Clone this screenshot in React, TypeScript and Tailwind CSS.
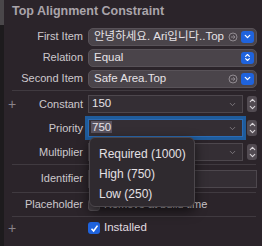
import { ChevronDown, ChevronUp, ChevronsUpDown } from "lucide-react";

const font = "font-['Liberation_Sans','Noto_Sans_CJK_KR',sans-serif]";

// 青いポップアップボタン
function BlueButton({ both }: { both?: boolean }) {
  return (
    <div className="w-[13px] h-[12px] rounded-[3px] bg-[#1f63dd] flex items-center justify-center">
      {both ? (
        <ChevronsUpDown size={9} strokeWidth={3} className="text-white" />
      ) : (
        <ChevronDown size={9} strokeWidth={3.5} className="text-white" />
      )}
    </div>
  );
}

function GoIcon() {
  return (
    <svg width="10" height="10" viewBox="0 0 10 10" className="text-[#8f898f]">
      <circle cx="5" cy="5" r="4" fill="none" stroke="currentColor" strokeWidth="1" />
      <path d="M3 5h4M5.3 3.3 7 5 5.3 6.7" fill="none" stroke="currentColor" strokeWidth="1" />
    </svg>
  );
}

function Stepper() {
  return (
    <div className="w-[10px] h-[16px] rounded-[3px] bg-[#524b52] flex flex-col items-center justify-center -space-y-[2px]">
      <ChevronUp size={9} strokeWidth={3} className="text-[#d8d4d8]" />
      <ChevronDown size={9} strokeWidth={3} className="text-[#d8d4d8]" />
    </div>
  );
}

function Popup({ text, go, both }: { text: string; go?: boolean; both?: boolean }) {
  return (
    <div className="flex-1 h-[18px] rounded-[5px] bg-[#4a444a] border border-[#585258] flex items-center pl-[5px] pr-[2px] gap-[3px]">
      <span className="flex-1 text-[11.5px] text-[#e6e2e6] truncate">{text}</span>
      {go && <GoIcon />}
      <BlueButton both={both} />
    </div>
  );
}

function Field({ value, focus, select }: { value: string; focus?: boolean; select?: boolean }) {
  return (
    <div className="flex-1 flex items-center gap-[4px]">
      <div
        className={`flex-1 h-[18px] bg-[#342e34] flex items-center pl-[2px] pr-[5px] ${
          focus ? "ring-[3px] ring-[#1f5c9c] border border-[#2a6bb5]" : "border border-[#4d474d]"
        }`}
      >
        <span className={`flex-1 text-[11.5px] text-[#e6e2e6] ${select ? "" : "pl-[1px]"}`}>
          {select ? <span className="bg-[#5a5460] px-[1px]">{value}</span> : value}
        </span>
        <ChevronDown size={9} strokeWidth={2} className="text-[#8f898f]" />
      </div>
      <Stepper />
    </div>
  );
}

function Row({ label, plus, h, children }: { label: string; plus?: boolean; h: string; children?: React.ReactNode }) {
  return (
    <div className={`flex items-center ${h}`}>
      <div className="w-[79px] flex items-center">
        <span className="w-[14px] pl-[4px] text-[14px] text-[#8a848a] leading-none">{plus ? "+" : ""}</span>
        <span className="flex-1 text-right text-[11px] text-[#cdc8cd]">{label}</span>
      </div>
      <div className="flex-1 flex items-center pl-[5px] pr-[5px]">{children}</div>
    </div>
  );
}

function Sep() {
  return <div className="ml-[8px] mr-[6px] h-px bg-[#403a40]" />;
}

function Check({ on }: { on?: boolean }) {
  return on ? (
    <div className="w-[12px] h-[12px] rounded-[3px] bg-[#1f63dd] flex items-center justify-center">
      <svg width="9" height="9" viewBox="0 0 9 9">
        <path d="M1.5 4.8 3.6 7 7.5 1.6" fill="none" stroke="white" strokeWidth="1.6" />
      </svg>
    </div>
  ) : (
    <div className="w-[12px] h-[12px] rounded-[3px] bg-[#4a444a] border border-[#5a545a]" />
  );
}

export default function App() {
  return (
    <div className={`w-[262px] h-[246px] bg-[#2b242a] flex overflow-hidden relative ${font}`}>
      <div className="w-[4px] flex flex-col">
        <div className="h-[25px] bg-[#4a474a]" />
        <div className="flex-1 bg-[#1d1b1d]" />
      </div>
      <div className="flex-1 flex flex-col">
        <div className="h-[26px] pl-[8px] pt-[2px] text-[12.5px] font-bold text-[#aaa4aa]">Top Alignment Constraint</div>
        <Row label="First Item" h="h-[21px]">
          <Popup text="안녕하세요. Ari입니다..Top" go />
        </Row>
        <Row label="Relation" h="h-[21px]">
          <Popup text="Equal" both />
        </Row>
        <Row label="Second Item" h="h-[21px]">
          <Popup text="Safe Area.Top" go />
        </Row>
        <div className="h-[1px]" />
        <Sep />
        <div className="h-[1px]" />
        <Row label="Constant" plus h="h-[24px]">
          <Field value="150" />
        </Row>
        <Row label="Priority" h="h-[24px]">
          <Field value="750" focus select />
        </Row>
        <Row label="Multiplier" h="h-[24px]">
          <Field value="1" />
        </Row>
        <Sep />
        <Row label="Identifier" h="h-[27px]">
          <div className="flex-1 h-[18px] bg-[#342e34] border border-[#4d474d]" />
        </Row>
        <Sep />
        <Row label="Placeholder" h="h-[23px]">
          <div className="flex items-center gap-[4px]">
            <Check />
            <span className="text-[11px] text-[#cdc8cd]">Remove at build time</span>
          </div>
        </Row>
        <Sep />
        <Row label="" plus h="h-[22px]">
          <div className="flex items-center gap-[4px]">
            <Check on />
            <span className="text-[11.5px] text-[#e0dce0]">Installed</span>
          </div>
        </Row>
      </div>

      {/* 優先度メニュー */}
      <div className="absolute left-[89px] top-[137px] w-[106px] h-[70px] rounded-[6px] bg-[#2f2a2f] border border-[#4c474c] shadow-[0_4px_12px_rgba(0,0,0,0.6)] flex flex-col pt-[6px] pl-[9px]">
        {["Required (1000)", "High (750)", "Low (250)"].map((item) => (
          <div key={item} className="h-[20px] flex items-center text-[12px] text-[#e4e0e4]">
            {item}
          </div>
        ))}
      </div>
    </div>
  );
}
